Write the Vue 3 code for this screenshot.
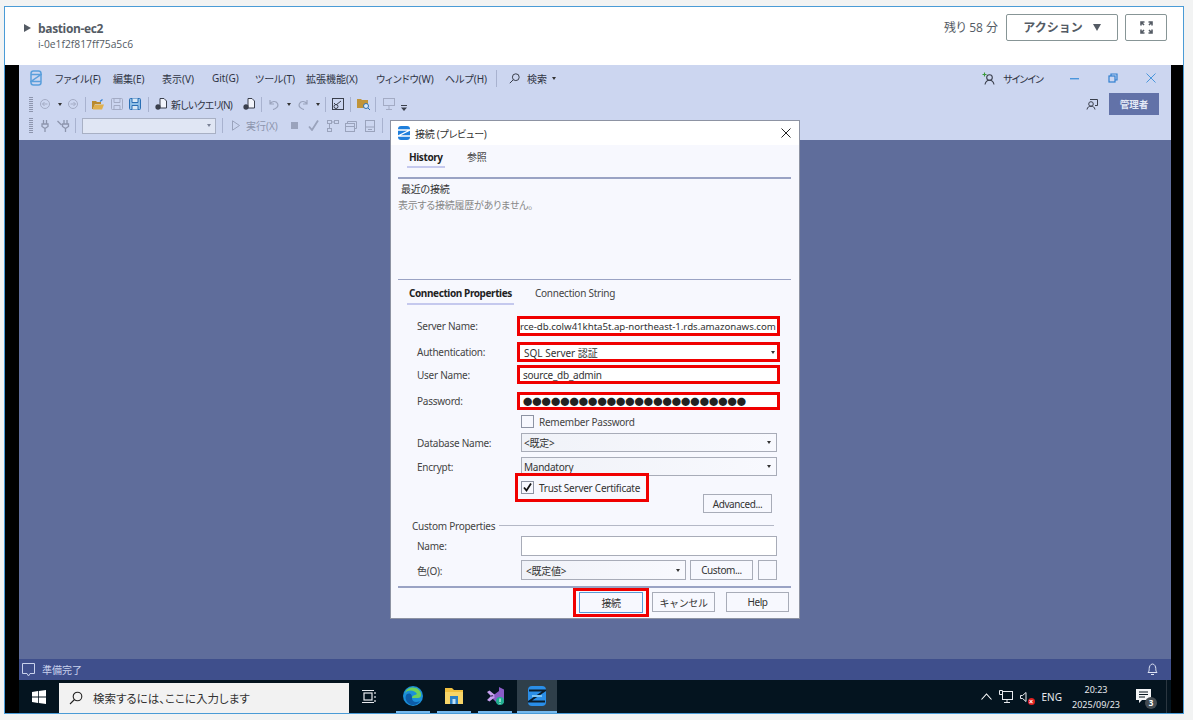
<script setup>
const menus = [
  { label: 'ファイル(F)', w: 58 },
  { label: '編集(E)', w: 49 },
  { label: '表示(V)', w: 50 },
  { label: 'Git(G)', w: 43 },
  { label: 'ツール(T)', w: 51 },
  { label: '拡張機能(X)', w: 70 },
  { label: 'ウィンドウ(W)', w: 69 },
  { label: 'ヘルプ(H)', w: 52 },
]
const password = '●'.repeat(24)
</script>

<template>
  <div class="page">
    <div class="frame">
      <header class="head">
        <span class="tri"></span>
        <div class="inst">
          <div class="inst-name">bastion-ec2</div>
          <div class="inst-id">i-0e1f2f817ff75a5c6</div>
        </div>
        <span class="remain">残り 58 分</span>
        <button class="aws-btn action">アクション<span class="down"></span></button>
        <button class="aws-btn full">
          <svg width="13" height="13" viewBox="0 0 13 13" fill="none" stroke="#545b64" stroke-width="1.6">
            <path d="M1 4.5V1h3.5M8.5 1H12v3.5M1 8.5V12h3.5M8.5 12H12V8.5M1.5 1.5l2.5 2.5M11.5 1.5L9 4M1.5 11.5L4 9M11.5 11.5L9 9" />
          </svg>
        </button>
      </header>

      <div class="desktop">
        <div class="app">
          <div class="titlebar">
            <div class="bar-menu">
              <svg class="logo" width="12" height="16" viewBox="0 0 12 16" fill="none" stroke="#5a9fdc" stroke-width="1.5">
                <rect x="1" y="1" width="10" height="14" rx="2.5" />
                <path d="M1 4.5h10L1 11.5h10" />
              </svg>
              <span v-for="m in menus" :key="m.label" class="menu" :style="{ width: m.w + 'px' }">{{ m.label }}</span>
              <i class="sep menu-sep"></i>
              <svg class="search-ico" width="11" height="11" viewBox="0 0 11 11" fill="none" stroke="#3a3f4c" stroke-width="1">
                <circle cx="6.8" cy="4.2" r="3.4" />
                <path d="M4.4 6.6L.8 10.2" />
              </svg>
              <span class="menu search-txt">検索</span>
              <span class="caret dark search-caret"></span>
              <svg class="signin-ico" width="13" height="13" viewBox="0 0 13 13" fill="none" stroke="#3a3f4c" stroke-width="1.1">
                <circle cx="7.5" cy="5.5" r="2.8" />
                <path d="M3 12.5c.5-3 2.300-4.300 4.500-4.300s4 1.300 4.500 4.300" />
                <path d="M.5 2.500h4M2.500.5v4" stroke="#3a9a3a" />
              </svg>
              <span class="menu signin">サインイン</span>
              <svg class="win-min" width="9" height="3" viewBox="0 0 9 3"><rect y="1" width="9" height="1.400" fill="#4a96dc" /></svg>
              <svg class="win-max" width="10" height="10" viewBox="0 0 10 10" fill="none" stroke="#2f7fd0" stroke-width="1.200">
                <rect x="1" y="3" width="6" height="6" />
                <path d="M3 3V1h6v6H7" />
              </svg>
              <svg class="win-close" width="10" height="10" viewBox="0 0 10 10" stroke="#4a96dc" stroke-width="1">
                <path d="M.5.5l9 9M9.500.5l-9 9" />
              </svg>
            </div>

            <div class="bar-tools">
              <i class="grip"></i>
              <svg class="m7" width="10" height="10" viewBox="0 0 10 10" fill="none" stroke="#a3abc4"><circle cx="5" cy="5" r="4.500" /><path d="M7.500 5h-5M4.500 3l-2 2 2 2" /></svg>
              <span class="caret dark m8"></span>
              <svg class="m6" width="10" height="10" viewBox="0 0 10 10" fill="none" stroke="#a3abc4"><circle cx="5" cy="5" r="4.500" /><path d="M2.500 5h5M5.500 3l2 2-2 2" /></svg>
              <i class="sep m7"></i>
              <svg class="m6" width="12" height="11" viewBox="0 0 12 11"><path d="M0 2h4l1 1h4v2H3L1 10H0z" fill="#b98a2e" /><path d="M2.500 5.500H12L10 10.500H.8z" fill="#e0b04c" /><path d="M8 2.500L10.500.5" stroke="#2f7fd0" stroke-width="1.200" /></svg>
              <svg class="m7" width="12" height="12" viewBox="0 0 12 12" fill="none" stroke="#a3abc4"><rect x=".5" y=".5" width="11" height="11" rx="1" /><path d="M3 .5v4h6v-4M3 11.500v-4h6v4" /></svg>
              <svg class="m6" width="12" height="12" viewBox="0 0 12 12" fill="#8fc0e8" stroke="#2a6fb4"><rect x=".5" y=".5" width="11" height="11" rx="1" /><path d="M3 .5v4h6v-4M3 11.500v-4h6v4" fill="#d8e8f6" /></svg>
              <i class="sep m7"></i>
              <svg class="m6" width="12" height="12" viewBox="0 0 12 12"><path d="M5 .5h4l2.500 2.500v7H5z" fill="#f2f4fb" stroke="#3a3f4c" /><ellipse cx="3" cy="9" rx="2.600" ry="2.800" fill="#3a3f4c" /></svg>
              <span class="tool-txt m4 nq">新しいクエリ(N)</span>
              <svg class="m11" width="12" height="12" viewBox="0 0 12 12"><path d="M5 .5h4l2.500 2.500v7H5z" fill="#f2f4fb" stroke="#3a3f4c" /><ellipse cx="3" cy="9" rx="2.600" ry="2.800" fill="#3a3f4c" /></svg>
              <i class="sep m6"></i>
              <svg class="m7" width="10" height="11" viewBox="0 0 10 11" fill="none" stroke="#9aa3bc" stroke-width="1.200"><path d="M1 1v4h4M1 5c1.500-3 6-3.500 7.500-.5S7 10 4 10.500" /></svg>
              <span class="caret dark m8"></span>
              <svg class="m7" width="10" height="11" viewBox="0 0 10 11" fill="none" stroke="#9aa3bc" stroke-width="1.200"><path d="M9 1v4H5M9 5C7.500 2 3 1.500 1.500 4.500S3 10 6 10.500" /></svg>
              <span class="caret dark m8"></span>
              <i class="sep m5"></i>
              <svg class="m6" width="12" height="12" viewBox="0 0 12 12" fill="none" stroke="#3a3f4c"><rect x=".5" y=".5" width="11" height="11" /><path d="M2 5l2 2 5-4" /><circle cx="4" cy="8.500" r="2" /></svg>
              <i class="sep m6"></i>
              <svg class="m6" width="13" height="12" viewBox="0 0 13 12"><path d="M0 1h4l1 1h6v8H0z" fill="#c0943a" /><circle cx="9" cy="8" r="2.500" fill="#dce8f6" stroke="#2a6fb4" /><path d="M11 10l2 2" stroke="#2a6fb4" /></svg>
              <i class="sep m5"></i>
              <svg class="m7" width="12" height="12" viewBox="0 0 12 12" fill="none" stroke="#a3abc4"><rect x=".5" y=".5" width="11" height="7" /><path d="M3 11.500h6M6 8v3" /></svg>
              <svg class="m6 overflow" width="6" height="6" viewBox="0 0 6 6" fill="#3a3f4c"><rect y="0" width="6" height="1" /><path d="M0 2.500h6L3 6z" /></svg>
              <svg class="me" width="12" height="12" viewBox="0 0 12 12" fill="none" stroke="#3a3f4c"><circle cx="5" cy="6" r="2.300" /><path d="M1 11.500c.5-2.500 2-3.300 4-3.300s3.500.8 4 3.300M4 1.500h7.500v6H9" /></svg>
              <span class="admin">管理者</span>
            </div>

            <div class="bar-tools row3">
              <i class="grip"></i>
              <svg class="m7" width="10" height="12" viewBox="0 0 10 12" fill="none" stroke="#8d95ad" stroke-width="1.300"><path d="M3.500 0v4M6.500 0v4M2 4h6v2.500L5 8.500 2 6.500zM5 8.500V12" /></svg>
              <svg class="m7" width="13" height="12" viewBox="0 0 13 12" fill="none" stroke="#8d95ad" stroke-width="1.300"><path d="M7 0v4M10 0v4M5.500 4h6v2.500L8.500 8.500 5.500 6.500zM8.500 8.500V12M.5 1l4 4" /></svg>
              <i class="sep m5"></i>
              <div class="tool-combo"><span class="caret"></span></div>
              <i class="sep m6"></i>
              <svg class="m9" width="8" height="11" viewBox="0 0 8 11" fill="none" stroke="#9aa3bc"><path d="M.5.800L7.500 5.500.5 10.200z" /></svg>
              <span class="tool-txt m6 run">実行(X)</span>
              <i class="stop m13"></i>
              <svg class="m10" width="11" height="11" viewBox="0 0 11 11" fill="none" stroke="#9aa3bc" stroke-width="1.800"><path d="M1 6.500l3 3.500 6-9.500" /></svg>
              <svg class="m8" width="12" height="12" viewBox="0 0 12 12" fill="none" stroke="#9aa3bc"><rect x=".5" y=".5" width="4" height="3" /><rect x="7.500" y=".5" width="4" height="3" /><rect x=".5" y="8.500" width="4" height="3" /><path d="M2.500 3.500v5M7.500 2h-3" /></svg>
              <svg class="m6" width="12" height="12" viewBox="0 0 12 12" fill="none" stroke="#9aa3bc"><rect x=".5" y="3.500" width="9" height="8" /><path d="M2.500 3.500v-2h9v7H9.500M.5 6.500h9" /></svg>
              <svg class="m8" width="10" height="12" viewBox="0 0 10 12" fill="none" stroke="#9aa3bc"><rect x=".5" y=".5" width="9" height="11" /><path d="M.5 7h9M3 9.500h4" /></svg>
              <i class="sep m7"></i>
            </div>
          </div>

          <main class="canvas"></main>

          <footer class="status">
            <svg width="13" height="14" viewBox="0 0 13 14" fill="none" stroke="#c9d2ec"><path d="M.5.500h12v10H8l-1.500 2.500L5 10.500H.5z" /></svg>
            <span class="status-txt">準備完了</span>
            <svg class="bell" width="11" height="13" viewBox="0 0 11 13" fill="none" stroke="#dfe5f5"><path d="M1 9.500c1-1 1.200-2 1.200-4S3.500 1 5.500 1s3.300 2.500 3.300 4.500.2 3 1.200 4zM4 11.500h3" /></svg>
          </footer>

          <div class="taskbar">
            <svg class="win-logo" width="14" height="14" viewBox="0 0 14 14" fill="#fff">
              <path d="M0 2l6-.9v5.400H0zM6.800 1l7.200-1v6.500H6.800zM0 7.400h6v5.500L0 12zM6.800 7.400H14V14l-7.200-1z" />
            </svg>
            <div class="task-search">
              <svg width="14" height="14" viewBox="0 0 14 14" fill="none" stroke="#222" stroke-width="1.100"><circle cx="8.500" cy="5.500" r="4.300" /><path d="M5.500 8.500L1 13" /></svg>
              <span>検索するには、ここに入力します</span>
            </div>
            <svg class="task-view" width="14" height="15" viewBox="0 0 14 15" fill="none" stroke="#e8eaee" stroke-width="1.200"><rect x="2" y="4" width="8" height="7" /><path d="M0 1.500h12M0 13.500h12M13 3v2M13 7v2M13 11v2" /></svg>
            <div class="task-app used">
              <svg width="20" height="20" viewBox="0 0 20 20"><circle cx="10" cy="10" r="10" fill="#1b8fd8" /><path d="M2 7c2-6 10-7 14-3 3 3 3 8-1 8H9c0-3 4-3 5-4C12 4 5 3 2 7z" fill="#6fd05a" /><path d="M9 12c0 4 4 5 8 3-3 5-9 5-12 2-3-3-3-7-1-9 2-1 5-1 5 4z" fill="#0c5ca8" /></svg>
            </div>
            <div class="task-app used">
              <svg width="18" height="16" viewBox="0 0 18 16"><path d="M0 0h7l2 2h9v14H0z" fill="#f0c040" /><rect y="4" width="18" height="12" fill="#f7d568" /><rect x="5" y="8" width="8" height="8" fill="#2a80c8" /><rect x="7.500" y="11" width="3" height="5" fill="#bfe0f6" /></svg>
            </div>
            <div class="task-app used">
              <svg width="17" height="18" viewBox="0 0 17 18"><path d="M12 0l5 2.500v13L12 18 4 10l8-6z" fill="#8a5cc8" /><path d="M0 5l2.500-1.500L8 8 5 10zM0 13l2.500 1.500L8 10 5 8z" fill="#c8a0f0" /><circle cx="13" cy="14" r="4" fill="#20b090" /><path d="M13 11.500v3.500M13 16v.8" stroke="#fff" /></svg>
            </div>
            <div class="task-app active">
              <svg width="18" height="20" viewBox="0 0 18 20"><rect width="18" height="20" rx="4" fill="#2a8ee8" /><path d="M1 4.500h16L1 15.500h16" fill="none" stroke="#0b1c2b" stroke-width="2" /><path d="M4 10h10" stroke="#7cc4f6" stroke-width="2" /></svg>
            </div>
            <div class="tray">
              <svg width="11" height="7" viewBox="0 0 11 7" fill="none" stroke="#fff" stroke-width="1.100"><path d="M.5 6.500l5-5.500 5 5.500" /></svg>
              <svg class="tray-net" width="14" height="14" viewBox="0 0 14 14" fill="none" stroke="#e8eaee"><rect x="3.500" y="1.500" width="10" height="8" /><path d="M8 9.500v3M5 12.500h6M.5 .5h3v4h-3z" /></svg>
              <div class="tray-sound">
                <svg width="9" height="12" viewBox="0 0 9 12" fill="none" stroke="#e8eaee"><path d="M.5 4.500h2L6 1.500v9L2.500 7.500h-2z" /></svg>
                <i class="mute">×</i>
              </div>
              <span class="eng">ENG</span>
              <div class="clock">
                <div>20:23</div>
                <div>2025/09/23</div>
              </div>
              <div class="notify">
                <svg width="15" height="15" viewBox="0 0 15 15"><path d="M0 0h15v11H6l-3 3v-3H0z" fill="#f4f5f7" /><path d="M3 3h9M3 5.500h9M3 8h6" stroke="#07151f" /></svg>
                <i class="notify-n">3</i>
              </div>
            </div>
          </div>

          <!-- 接続ダイアログ -->
          <section class="dialog">
            <div class="dlg-title">
              <svg width="12" height="14" viewBox="0 0 12 14"><rect width="12" height="14" rx="3" fill="#1f7fdc" /><path d="M0 4h12L0 10h12" fill="none" stroke="#fff" stroke-width="1.300" /></svg>
              <span>接続 (プレビュー)</span>
              <svg class="dlg-x" width="10" height="10" viewBox="0 0 10 10" stroke="#222" stroke-width="1"><path d="M.5.500l9 9M9.500.500l-9 9" /></svg>
            </div>

            <div class="tabs top-tabs">
              <span class="tab on hist">History</span>
              <span class="tab ref">参照</span>
            </div>
            <hr class="rule" />
            <div class="recent">
              <div class="recent-h">最近の接続</div>
              <div class="recent-e">表示する接続履歴がありません。</div>
            </div>
            <hr class="rule" />
            <div class="tabs conn-tabs">
              <span class="tab on props">Connection Properties</span>
              <span class="tab str">Connection String</span>
            </div>

            <div class="form">
              <div class="row r-server">
                <label>Server Name:</label>
                <div class="ctl red server">rce-db.colw41khta5t.ap-northeast-1.rds.amazonaws.com</div>
              </div>
              <div class="row r-auth">
                <label>Authentication:</label>
                <div class="ctl red auth">SQL Server 認証<span class="caret dark"></span></div>
              </div>
              <div class="row r-user">
                <label>User Name:</label>
                <div class="ctl red user">source_db_admin</div>
              </div>
              <div class="row r-pass">
                <label>Password:</label>
                <div class="ctl red pass">{{ password }}</div>
              </div>
              <div class="row r-remember">
                <i class="check"></i>
                <span class="check-txt">Remember Password</span>
              </div>
              <div class="row r-db">
                <label>Database Name:</label>
                <div class="ctl select">&lt;既定&gt;<span class="caret dark"></span></div>
              </div>
              <div class="row r-enc">
                <label>Encrypt:</label>
                <div class="ctl select">Mandatory<span class="caret dark"></span></div>
              </div>
              <div class="row r-trust">
                <div class="trust">
                  <i class="check">
                    <svg width="11" height="11" viewBox="0 0 11 11" fill="none" stroke="#111" stroke-width="1.800"><path d="M2 5.500l2.500 3L9 1.500" /></svg>
                  </i>
                  <span class="check-txt">Trust Server Certificate</span>
                </div>
              </div>
              <button class="dlg-btn advanced">Advanced...</button>
              <div class="group"><span>Custom Properties</span><i></i></div>
              <div class="row r-name">
                <label>Name:</label>
                <div class="ctl blank"></div>
              </div>
              <div class="row r-color">
                <label>色(O):</label>
                <div class="ctl select color">&lt;既定値&gt;<span class="caret dark"></span></div>
                <button class="dlg-btn custom">Custom...</button>
                <i class="swatch"></i>
              </div>
            </div>

            <hr class="rule foot-rule" />
            <div class="foot">
              <div class="ok-wrap"><button class="dlg-btn ok">接続</button></div>
              <button class="dlg-btn cancel">キャンセル</button>
              <button class="dlg-btn help">Help</button>
            </div>
          </section>
        </div>
      </div>
    </div>
  </div>
</template>

<style>
body {
  margin: 0;
  background: #f2f3f3;
}
</style>

<style scoped>
.page {
  width: 1193px;
  height: 720px;
  box-sizing: border-box;
  padding: 6px 9px 6px 4px;
  font-family: "Noto Sans", "Noto Sans CJK JP", sans-serif;
  font-feature-settings: "palt";
  overflow: hidden;
}
.frame {
  height: 708px;
  box-sizing: border-box;
  border: 1px solid #4a9bd6;
  display: flex;
  flex-direction: column;
}

/* ヘッダー */
.head {
  height: 58px;
  flex: none;
  display: flex;
  align-items: center;
  background: #fff;
  color: #545b64;
  font-family: "Open Sans", "Noto Sans CJK JP", sans-serif;
}
.tri {
  margin-left: 19px;
  margin-bottom: 17px;
  border-left: 7px solid #545b64;
  border-top: 4.500px solid transparent;
  border-bottom: 4.500px solid transparent;
}
.inst {
  margin-left: 7px;
  flex: 1;
}
.inst-name {
  font-size: 12px;
  font-weight: 700;
  line-height: 16px;
  letter-spacing: -0.35px;
}
.inst-id {
  font-size: 10.300px;
  line-height: 14px;
}
.remain {
  font-size: 12px;
  margin-right: 8px;
  margin-bottom: 18px;
}
.aws-btn {
  height: 27px;
  box-sizing: border-box;
  margin-bottom: 18px;
  background: #fff;
  border: 1px solid #879596;
  border-radius: 2px;
  color: #545b64;
  font: 700 12px "Open Sans", "Noto Sans CJK JP", sans-serif;
  display: flex;
  align-items: center;
  justify-content: center;
  padding: 0;
}
.action {
  width: 112px;
}
.down {
  margin-left: 10px;
  border-top: 7px solid #545b64;
  border-left: 4.500px solid transparent;
  border-right: 4.500px solid transparent;
}
.full {
  width: 42px;
  margin-left: 7px;
  margin-right: 16px;
}

/* アプリ本体 */
.desktop {
  flex: 1;
  background: #000;
  padding: 0 12px 0 14px;
  display: flex;
}
.app {
  position: relative;
  width: 1152px;
  display: flex;
  flex-direction: column;
}
.titlebar {
  height: 75px;
  flex: none;
  background: #ccd6f0;
  color: #2f3444;
  font-size: 10px;
}
.bar-menu {
  height: 28px;
  box-sizing: border-box;
  padding-bottom: 2px;
  display: flex;
  align-items: center;
  padding-left: 11px;
}
.logo {
  margin-right: 13px;
}
.menu {
  white-space: nowrap;
}
.sep {
  width: 1px;
  height: 15px;
  background: #a8b2cf;
  flex: none;
}
.menu-sep {
  height: 17px;
  margin-left: -1px;
}
.search-ico {
  margin-left: 12px;
}
.search-txt {
  margin-left: 7px;
}
.search-caret {
  margin-left: 5px;
}
.signin-ico {
  margin-left: auto;
}
.signin {
  margin-left: 8px;
  letter-spacing: -1px;
}
.win-min {
  margin-left: 27px;
}
.win-max {
  margin-left: 29px;
}
.win-close {
  margin-left: 28px;
  margin-right: 15px;
}
.bar-tools {
  height: 22px;
  display: flex;
  align-items: center;
  padding-left: 10px;
}
.row3 {
  height: 21px;
}
.grip {
  width: 4px;
  height: 15px;
  flex: none;
  background: repeating-linear-gradient(#8d95ad 0 1px, transparent 1px 2px);
}
.caret {
  width: 0;
  height: 0;
  flex: none;
  border-top: 3px solid #7a8296;
  border-left: 2.500px solid transparent;
  border-right: 2.500px solid transparent;
}
.caret.dark {
  border-top-color: #333;
}
.m4 { margin-left: 4px; }
.m5 { margin-left: 5px; }
.m6 { margin-left: 6px; }
.m7 { margin-left: 7px; }
.m8 { margin-left: 8px; }
.m9 { margin-left: 9px; }
.m10 { margin-left: 10px; }
.m11 { margin-left: 11px; }
.m13 { margin-left: 13px; }
.tool-txt {
  white-space: nowrap;
}
.nq {
  width: 61px;
  letter-spacing: -0.8px;
}
.run {
  width: 32px;
  color: #8d95ad;
}
.overflow {
  margin-top: 8px;
}
.me {
  margin-left: auto;
}
.admin {
  width: 50px;
  height: 22px;
  margin-left: 11px;
  margin-right: 12px;
  background: #6272a8;
  color: #e4e9f6;
  font-size: 9.500px;
  font-weight: 700;
  display: flex;
  align-items: center;
  justify-content: center;
}
.tool-combo {
  width: 134px;
  height: 16px;
  box-sizing: border-box;
  margin-left: 6px;
  background: #e0e6f4;
  border: 1px solid #a8b0c4;
  display: flex;
  align-items: center;
  justify-content: flex-end;
  padding-right: 4px;
}
.stop {
  width: 7px;
  height: 7px;
  background: #9aa3bc;
  flex: none;
}
.canvas {
  flex: 1;
  background: #5f6d9b;
}
.status {
  height: 21px;
  flex: none;
  background: #3f4f8c;
  display: flex;
  align-items: center;
  padding-left: 3px;
  color: #c9d2ec;
  font-size: 10px;
}
.status-txt {
  margin-left: 7px;
}
.bell {
  margin-left: auto;
  margin-right: 13px;
}

/* タスクバー */
.taskbar {
  height: 33px;
  flex: none;
  background: #04141f;
  display: flex;
  align-items: center;
  color: #e8eaee;
  box-sizing: border-box;
}
.win-logo {
  margin-left: 13px;
}
.task-search {
  width: 290px;
  height: 30px;
  margin-left: 13px;
  margin-top: 3px;
  background: #f2f2f2;
  color: #333;
  font-size: 11.500px;
  display: flex;
  align-items: center;
  gap: 10px;
  padding-left: 10px;
  box-sizing: border-box;
}
.task-view {
  margin-left: 13px;
}
.task-app {
  width: 34px;
  height: 33px;
  margin-left: 7px;
  display: flex;
  align-items: center;
  justify-content: center;
  box-sizing: border-box;
}
.task-view + .task-app {
  margin-left: 20px;
}
.used {
  border-bottom: 2px solid #76b9ed;
}
.active {
  width: 40px;
  margin-left: 5px;
  background: #2f3f4a;
  border-bottom: 2px solid #76b9ed;
}
.tray {
  margin-left: auto;
  height: 100%;
  box-sizing: border-box;
  padding-right: 15px;
  display: flex;
  align-items: center;
  box-shadow: inset -4px 0 0 #04141f, inset -5px 0 0 #2a3640;
}
.tray-net {
  margin-left: 7px;
}
.tray-sound {
  position: relative;
  width: 14px;
  height: 14px;
  margin-left: 7px;
  display: flex;
  align-items: center;
}
.mute {
  position: absolute;
  right: -1px;
  bottom: -1px;
  width: 7px;
  height: 7px;
  border-radius: 50%;
  background: #e02020;
  color: #fff;
  font: 700 7px/7px "Liberation Sans", sans-serif;
  text-align: center;
}
.eng {
  margin-left: 8px;
  font-size: 10px;
}
.clock {
  width: 66px;
  margin-left: 1px;
  text-align: center;
  font-size: 9px;
  line-height: 15px;
}
.notify {
  position: relative;
  width: 20px;
  height: 20px;
  margin-left: 7px;
}
.notify-n {
  position: absolute;
  right: -1px;
  bottom: -2px;
  width: 12px;
  height: 12px;
  border-radius: 50%;
  background: #444c52;
  color: #fff;
  font: 700 8px/12px "Noto Sans", sans-serif;
  text-align: center;
}

/* ダイアログ */
.dialog {
  position: absolute;
  left: 371px;
  top: 55px;
  width: 410px;
  height: 499px;
  box-sizing: border-box;
  background: #f7f8fe;
  border: 1px solid #8d93a3;
  display: flex;
  flex-direction: column;
  color: #444;
  font-size: 10px;
  letter-spacing: -0.25px;
}
.dlg-title {
  height: 24px;
  flex: none;
  background: #fff;
  display: flex;
  align-items: center;
  padding-left: 7px;
  color: #333;
}
.dlg-title span {
  margin-left: 5px;
}
.dlg-x {
  margin-left: auto;
  margin-right: 8px;
}
.tabs {
  display: flex;
  flex: none;
}
.top-tabs {
  height: 32px;
  padding-left: 16px;
}
.conn-tabs {
  height: 26px;
  padding-left: 16px;
}
.tab {
  box-sizing: border-box;
  height: 100%;
  display: block;
  padding: 0 2px;
  line-height: 27px;
  white-space: nowrap;
}
.top-tabs .tab {
  line-height: 25px;
}
.on {
  color: #222;
  font-weight: 700;
  letter-spacing: -0.4px;
}
.hist {
  width: 38px;
  height: 23px;
  border-bottom: 2px solid #c5c9ee;
}
.ref {
  margin-left: 20px;
}
.props {
  width: 107px;
  height: 25px;
  padding: 0 2px;
  border-bottom: 2px solid #c5c9ee;
}
.str {
  margin-left: 19px;
  color: #444;
}
.rule {
  flex: none;
  height: 1.500px;
  width: 393px;
  margin: 0 0 0 7px;
  border: 0;
  background: #9aa3c4;
}
.recent {
  height: 100px;
  flex: none;
  box-sizing: border-box;
  padding: 3px 0 0 7px;
}
.recent-h {
  color: #333;
  padding-left: 3px;
  line-height: 15px;
}
.recent-e {
  color: #888;
  line-height: 16px;
}
.form {
  display: flex;
  flex-direction: column;
  flex: none;
}
.row {
  display: flex;
  align-items: center;
  padding-left: 26px;
  flex: none;
}
.row label {
  width: 104px;
  flex: none;
  white-space: nowrap;
}
.ctl {
  width: 256px;
  height: 100%;
  box-sizing: border-box;
  flex: none;
  background: #fff;
  border: 1px solid #a8acb8;
  display: flex;
  align-items: center;
  padding-left: 2px;
  color: #333;
  white-space: nowrap;
  overflow: hidden;
}
.select {
  background: linear-gradient(90deg, #f0f2f8, #f8f9fe);
  padding-left: 2px;
  justify-content: space-between;
  padding-right: 5px;
}
.red {
  width: 263px;
  margin-left: -4px;
  border: 3px solid #f00000;
  padding-left: 3px;
}
.r-server {
  height: 20px;
  margin-top: 10px;
}
.server {
  padding-left: 0;
  font-size: 9.700px;
  letter-spacing: -0.050px;
}
.r-auth {
  height: 20px;
  margin-top: 6px;
}
.auth {
  justify-content: space-between;
  padding-right: 2px;
  padding-left: 4px;
  letter-spacing: 0;
}
.r-user {
  height: 19px;
  margin-top: 3px;
}
.r-pass {
  height: 18px;
  margin-top: 8px;
}
.pass {
  font: 9.300px "Noto Sans CJK JP", sans-serif;
  font-feature-settings: normal;
  letter-spacing: 0;
  color: #222;
}
.r-remember {
  height: 13px;
  margin-top: 5px;
  padding-left: 130px;
}
.check {
  width: 13px;
  height: 13px;
  box-sizing: border-box;
  flex: none;
  background: #f7f8fe;
  border: 1px solid #8d93a3;
  display: flex;
  align-items: center;
  justify-content: center;
}
.check-txt {
  margin-left: 5px;
  white-space: nowrap;
}
.r-db,
.r-enc {
  height: 19px;
  margin-top: 5px;
}
.r-trust {
  height: 29px;
  margin-top: -3px;
  padding-left: 124px;
}
.trust {
  width: 134px;
  height: 29px;
  box-sizing: border-box;
  border: 3px solid #f00000;
  display: flex;
  align-items: center;
  padding-left: 3px;
}
.trust .check-txt {
  color: #333;
}
.dlg-btn {
  height: 20px;
  box-sizing: border-box;
  background: #f7f8fe;
  border: 1px solid #a8acb8;
  color: #333;
  font: 10px "Noto Sans", "Noto Sans CJK JP", sans-serif;
  letter-spacing: -0.4px;
  padding: 0;
  flex: none;
}
.advanced {
  width: 69px;
  height: 19px;
  margin: -8px 0 0 312px;
}
.group {
  height: 13px;
  margin-top: 6px;
  padding-left: 21px;
  display: flex;
  align-items: center;
}
.group i {
  width: 275px;
  height: 1px;
  margin-left: 4px;
  background: #b4b8c6;
}
.r-name,
.r-color {
  height: 20px;
  margin-top: 4px;
}
.blank {
  background: #fff;
}
.color {
  width: 165px;
  padding-left: 4px;
}
.custom {
  width: 63px;
  margin-left: 4px;
}
.swatch {
  width: 19px;
  height: 20px;
  box-sizing: border-box;
  margin-left: 5px;
  background: #f7f8fe;
  border: 1px solid #a8acb8;
}
.foot-rule {
  margin-top: 6px;
}
.foot {
  height: 29px;
  display: flex;
  align-items: center;
  padding-left: 182px;
}
.ok-wrap {
  width: 76px;
  height: 29px;
  box-sizing: border-box;
  border: 3px solid #f00000;
  display: flex;
  align-items: center;
  justify-content: center;
  flex: none;
}
.ok {
  width: 64px;
  height: 21px;
  border-color: #5a9bd6;
}
.cancel {
  width: 63px;
  margin-left: 3px;
}
.help {
  width: 63px;
  margin-left: 11px;
}
</style>
